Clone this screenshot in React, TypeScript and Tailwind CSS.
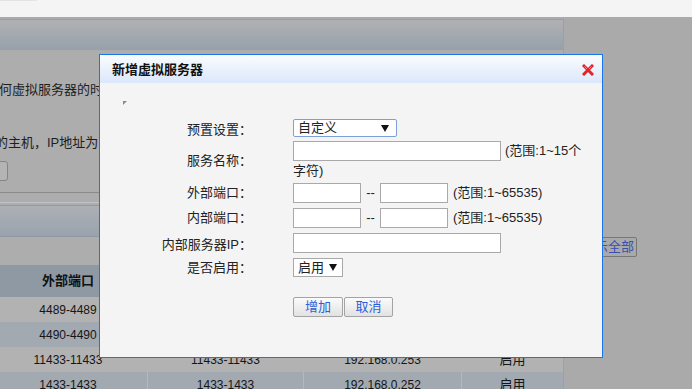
import React from "react";

const Arrow = () => (
  <svg width="8" height="7" viewBox="0 0 8 7" className="block">
    <polygon points="0,0 8,0 4,7" fill="#111" />
  </svg>
);

function Input({ w }: { w: string }) {
  return <div className={`${w} h-[20px] border border-[#a9a9a9] bg-white`} />;
}

const rows = [
  { a: "4489-4489", b: "4489-4489", c: "192.168.0.254", d: "启用" },
  { a: "4490-4490", b: "4490-4490", c: "192.168.0.254", d: "启用" },
  { a: "11433-11433", b: "11433-11433", c: "192.168.0.253", d: "启用" },
  { a: "1433-1433", b: "1433-1433", c: "192.168.0.252", d: "启用" },
];

export default function App() {
  return (
    <div className="relative w-[692px] h-[389px] overflow-hidden bg-[#aaaaaa] font-['Liberation_Sans','Noto_Sans_CJK_SC',sans-serif] text-[13px]">
      {/* top strip */}
      <div className="h-[17px] bg-[#f4f4f4]">
        <div className="w-[37px] h-[1px] bg-[#e4e4e4]" />
      </div>

      <div className="flex">
        {/* background panel */}
        <div className="w-[575px] -ml-[11px] mt-[2px] shrink-0 border-r border-[#9aa0a6] bg-[#adadad]">
          <div className="h-[31px] border-t border-b border-[#9a9fa5] bg-gradient-to-b from-[#b0b1b3] to-[#97a1ab]" />
          <div className="pt-[32px] pl-[10px] h-[16px] box-content leading-[16px] text-[#1e1e1e] whitespace-nowrap">
            何虚拟服务器的时候
          </div>
          <div className="mt-[37px] pl-[6px] h-[16px] leading-[16px] text-[#1e1e1e] whitespace-nowrap">
            的主机，IP地址为
          </div>
          <div className="mt-[10px] ml-[-30px] w-[49px] h-[20px] border border-[#858585] rounded-[3px] bg-[#b4b4b4]" />
          <div className="mt-[11px] h-[1px] bg-[#8a8a8a]" />
          <div className="mt-[9px] h-[1px] bg-[#bac2ca]" />
          <div className="mt-[2px] h-[32px] border-t border-b border-[#8e99a4] bg-gradient-to-b from-[#adb0b5] to-[#99a3ad]" />
          <div className="h-[28px]" />
          {/* table */}
          <div className="grid grid-cols-[158px_156px_158px_102px] h-[32px] bg-[#8f99a4] font-bold text-[#111] items-center text-center">
            <div>外部端口</div>
            <div>内部端口</div>
            <div>内部服务器IP</div>
            <div>状态</div>
          </div>
          {rows.map((r, i) => {
            const blue = i % 2 === 1;
            const cell = `flex items-center justify-center ${
              blue ? "border-l border-[#b5b9bf]" : "border-l border-[#b2b2b2]"
            }`;
            return (
              <div
                key={i}
                className={`grid grid-cols-[158px_156px_158px_102px] h-[25px] text-[12px] text-[#151515] ${
                  blue ? "bg-[#a2a9b1]" : "bg-[#b2b2b2]"
                }`}
              >
                <div className="flex items-center justify-center">{r.a}</div>
                <div className={cell}>{r.b}</div>
                <div className={cell}>{r.c}</div>
                <div className={`${cell} text-[13px]`}>{r.d}</div>
              </div>
            );
          })}
        </div>

        {/* right area */}
        <div className="pt-[220px] pl-[15px]">
          <div className="h-[20px] px-[2px] border border-[#777] rounded-[2px] bg-[#a9a9a9] text-[#3a4fae] leading-[18px] whitespace-nowrap">
            显示全部
          </div>
        </div>
      </div>

      {/* dialog */}
      <div className="absolute left-[99px] top-[54px] w-[504px] h-[304px] border border-[#1a74ea] bg-[#f4f4f4] flex flex-col">
        <div className="h-[28px] shrink-0 flex items-center justify-between pl-[12px] pr-[8px] bg-gradient-to-b from-[#fafcff] to-[#dbe7fa]">
          <span className="font-bold text-[#111] leading-[16px] pt-[1px]">新增虚拟服务器</span>
          <svg width="12" height="12" viewBox="0 0 12 12" className="block mt-[2px]">
            <path d="M2 2 L10 10 M10 2 L2 10" stroke="#e3232b" strokeWidth="3" strokeLinecap="square" />
            <path d="M2.5 2.5 L5 5 M9.5 2.5 L7 5" stroke="#f58a8e" strokeWidth="1" />
          </svg>
        </div>

        <div className="flex flex-col text-[#222]">
          <div className="mt-[18px] ml-[23px] w-[4px] h-[4px]">
            <svg width="4" height="4" viewBox="0 0 4 4" className="block">
              <polygon points="0,0 4,0 0,4" fill="#8a8a8a" />
            </svg>
          </div>

          <div className="mt-[14px] flex flex-col gap-[5px]">
            {/* row 1 */}
            <div className="flex h-[18px] items-center">
              <div className="w-[152px] text-right pt-[4px] leading-[16px]">预置设置：</div>
              <div className="ml-[41px] w-[104px] h-[18px] border border-[#7da0d8] rounded-[2px] bg-white flex items-center justify-between pl-[4px] pr-[7px]">
                <span className="leading-[16px]">自定义</span>
                <Arrow />
              </div>
            </div>
            {/* row 2 */}
            <div className="flex h-[36px] items-center">
              <div className="w-[152px] text-right leading-[16px] pt-[2px]">服务名称：</div>
              <div className="ml-[41px] flex flex-col">
                <div className="flex items-center">
                  <Input w="w-[208px]" />
                  <span className="ml-[4px] leading-[16px]">(范围:1~15个</span>
                </div>
                <span className="leading-[16px] mt-[2px]">字符)</span>
              </div>
            </div>
            {/* row 3 & 4 */}
            {["外部端口：", "内部端口："].map((l) => (
              <div key={l} className="flex h-[20px] items-center">
                <div className="w-[152px] text-right leading-[16px]">{l}</div>
                <div className="ml-[41px] flex items-center">
                  <Input w="w-[68px]" />
                  <span className="w-[19px] text-center leading-[16px]">--</span>
                  <Input w="w-[68px]" />
                  <span className="ml-[5px] leading-[16px]">(范围:1~65535)</span>
                </div>
              </div>
            ))}
            {/* row 5 */}
            <div className="flex h-[20px] items-center">
              <div className="w-[152px] text-right leading-[16px] pt-[3px] whitespace-nowrap">内部服务器IP：</div>
              <div className="ml-[41px]">
                <Input w="w-[208px]" />
              </div>
            </div>
            {/* row 6 */}
            <div className="flex h-[19px] items-center">
              <div className="w-[152px] text-right leading-[16px] pt-[1px]">是否启用：</div>
              <div className="ml-[41px] w-[50px] h-[19px] border border-[#a9a9a9] bg-white flex items-center justify-between pl-[4px] pr-[5px]">
                <span className="leading-[16px]">启用</span>
                <Arrow />
              </div>
            </div>
          </div>

          {/* buttons */}
          <div className="mt-[20px] ml-[193px] flex gap-[1px]">
            <div className="w-[50px] h-[20px] border border-[#a3a3a3] rounded-[2px] bg-gradient-to-b from-[#fbfbfb] to-[#e2e2e2] text-[#2d5fd8] flex items-center justify-center leading-[16px]">
              增加
            </div>
            <div className="w-[49px] h-[20px] border border-[#a3a3a3] rounded-[2px] bg-gradient-to-b from-[#fbfbfb] to-[#e2e2e2] text-[#2d5fd8] flex items-center justify-center leading-[16px]">
              取消
            </div>
          </div>
        </div>
      </div>
    </div>
  );
}
